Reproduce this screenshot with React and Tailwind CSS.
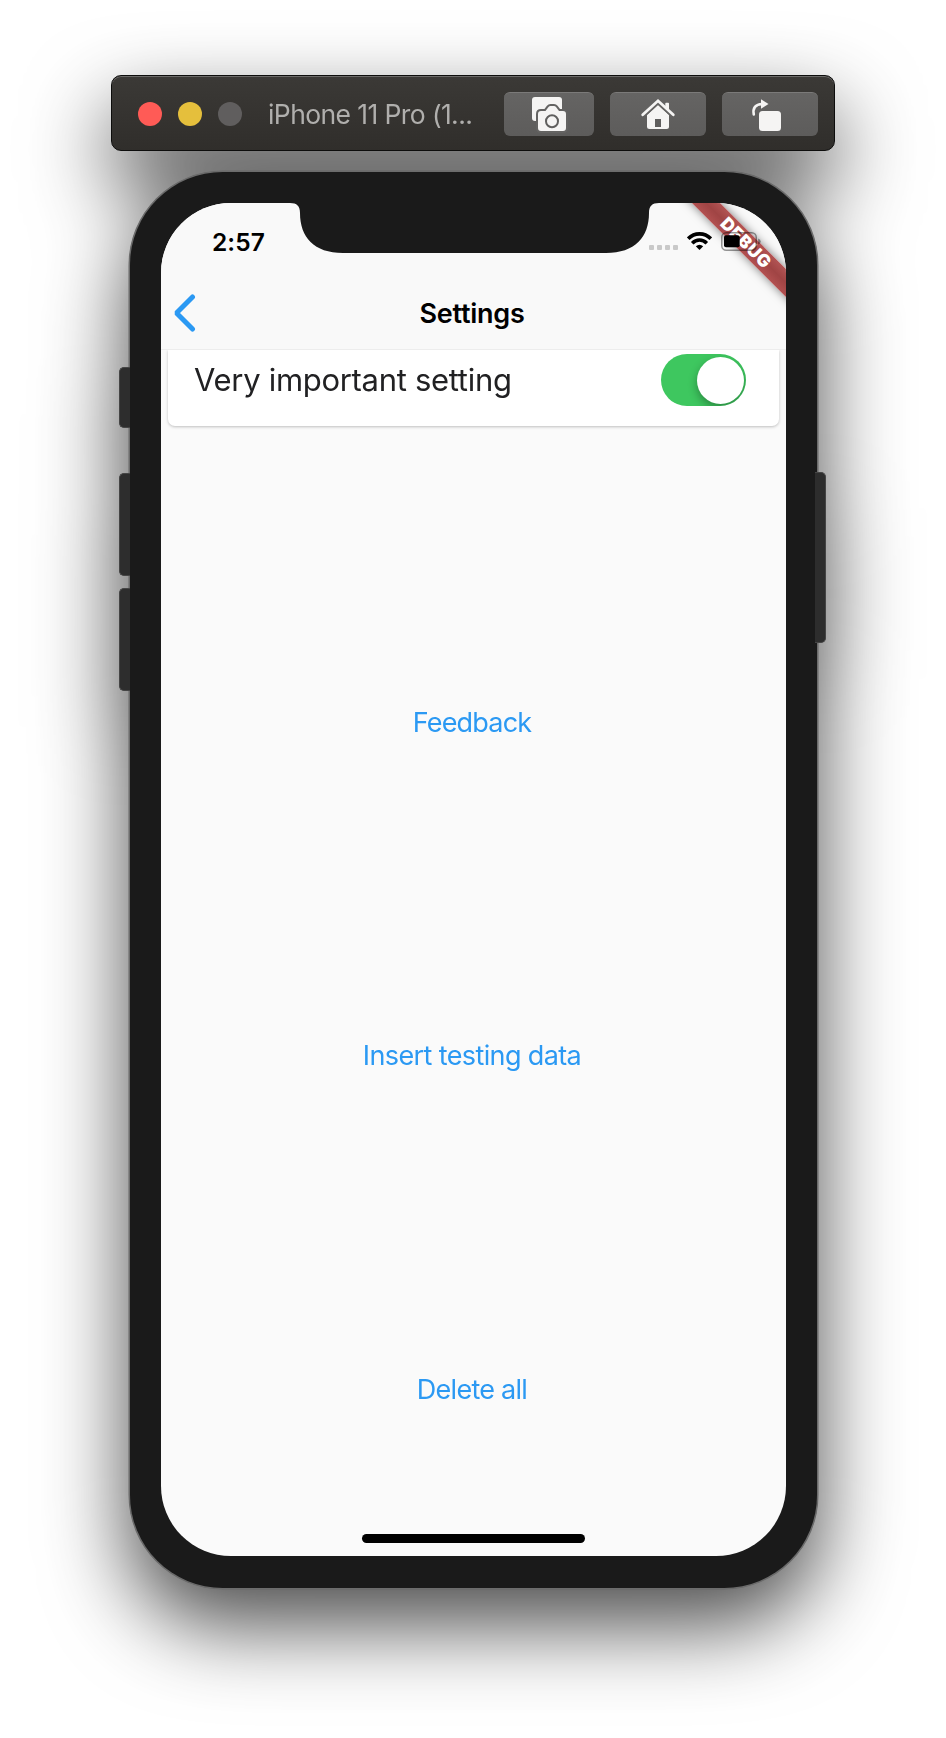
const actions = [
  { label: 'Feedback', tracking: 'tracking-[-0.8px]' },
  { label: 'Insert testing data', tracking: 'tracking-[-0.62px]' },
  { label: 'Delete all', tracking: 'tracking-[-0.74px]' },
];

function ToolButton({ width, children }) {
  return (
    <button className={`${width} h-[44px] rounded-[6px] border-t border-[#7b7a79] bg-linear-to-b from-[#656463] to-[#5d5c5b]`}>
      <svg className="-mt-px block h-[44px] w-full" fill="#f5f4f3">{children}</svg>
    </button>
  );
}

function TitleBar() {
  return (
    <header className="flex h-[76px] w-[724px] items-center rounded-[10px] border border-[#0d0d0c] bg-linear-to-b from-[#3b3936] to-[#302e2b] pl-[26px] shadow-[inset_0_1px_0_#6b6a68]">
      <div className="flex gap-4 pt-[2px]">
        <span className="size-6 rounded-full bg-[#ff5b56]" />
        <span className="size-6 rounded-full bg-[#e5bf3c]" />
        <span className="size-6 rounded-full bg-[#605e5e]" />
      </div>
      <h1 className="ml-[26px] w-[236px] whitespace-nowrap pt-[2px] text-[26.500px] leading-[34px] tracking-[-0.6px] text-[#b0afad]">iPhone 11 Pro (1...</h1>
      <div className="flex gap-4 pt-[2px]">
        <ToolButton width="w-[90px]">
          <rect x="28" y="5" width="30" height="24" rx="3" />
          <path d="M37 19h4.500l3-4q.8-1 2-1h3.500q1.200 0 2 1l3 4H59q3 0 3 3v14q0 3-3 3H37q-3 0-3-3V22q0-3 3-3Z" stroke="#646362" strokeWidth="4" />
          <path d="M37 19h4.500l3-4q.8-1 2-1h3.500q1.200 0 2 1l3 4H59q3 0 3 3v14q0 3-3 3H37q-3 0-3-3V22q0-3 3-3Z" />
          <circle cx="48" cy="29.300" r="6" stroke="#605f5e" strokeWidth="2" />
        </ToolButton>
        <ToolButton width="w-[96px]">
          <path d="M48 13 59 23v11.500q0 2.500-2.500 2.500h-17q-2.500 0-2.500-2.500V23Z" />
          <path d="M32.700 22.700 48 8.800l15.300 13.900" fill="none" stroke="#646362" strokeWidth="6" />
          <path d="M55.300 11.500q0-.8.800-.8h2.100q.8 0 .8.800V18l-3.700-3Z" />
          <path d="M32.700 22.700 48 8.800l15.300 13.900" fill="none" stroke="#f5f4f3" strokeWidth="2.800" strokeLinecap="round" />
          <rect x="45" y="27" width="6" height="8" fill="#5f5e5d" />
        </ToolButton>
        <ToolButton width="w-[96px]">
          <rect x="37" y="19" width="22" height="20" rx="3.500" />
          <path d="M31.800 22.500C30.500 16 33.500 12.200 40 12" fill="none" stroke="#f5f4f3" strokeWidth="2.600" strokeLinecap="round" />
          <path d="M39 7.300v9.400l7.500-4.700Z" />
        </ToolButton>
      </div>
    </header>
  );
}

function StatusBar() {
  return (
    <div className="flex h-[68px] shrink-0 items-center justify-between pl-[51px] pr-[25px] pt-2">
      <span className="pt-px text-[24.500px] font-semibold leading-7 tracking-[0.1px] text-black">2:57</span>
      <div className="z-20 flex h-5 items-center">
        <div className="mr-[9px] flex gap-[3px] pt-[13px]">
          <i className="size-[5px] rounded-[1px] bg-[#c9c9c9]" />
          <i className="size-[5px] rounded-[1px] bg-[#c9c9c9]" />
          <i className="size-[5px] rounded-[1px] bg-[#c9c9c9]" />
          <i className="size-[5px] rounded-[1px] bg-[#c9c9c9]" />
        </div>
        <svg width="25" height="18" viewBox="0 0 25 18" fill="none" stroke="#000" strokeWidth="3.600">
          <path d="M1.200 6.700C7.500.2 17.500.2 23.800 6.700M5.200 11.200c4.200-4.200 10.400-4.200 14.600 0" />
          <path d="M12.500 18 8.800 14.300q3.700-3 7.400 0Z" fill="#000" stroke="none" />
        </svg>
        <svg className="ml-[9px]" width="40" height="19" viewBox="0 0 40 19">
          <rect x=".75" y=".75" width="34.500" height="17.500" rx="4.500" fill="none" stroke="#000" strokeOpacity=".4" strokeWidth="1.500" />
          <rect x="3" y="3.300" width="15.700" height="12" rx="2" />
          <path d="M37.200 6.500q2.500 1 2.500 3t-2.500 3Z" fillOpacity=".4" />
        </svg>
      </div>
    </div>
  );
}

function Screen() {
  return (
    <main className="relative isolate flex h-[1353px] w-[625px] flex-col overflow-hidden rounded-[70px] bg-[#fafafa]">
      <div className="relative h-[147px] shrink-0 border-b border-[#ededed] bg-[#f9f9f9]">
        <StatusBar />
        <nav className="flex h-[84px] items-center">
          <svg className="ml-[12px]" width="24" height="38" viewBox="0 0 24 38" fill="none" stroke="#2b99f3" strokeWidth="5" strokeLinecap="round" strokeLinejoin="bevel">
            <path d="M19.500 3 3.500 19l16 16" />
          </svg>
          <h2 className="flex-1 pr-[39px] pt-[2px] text-center text-[27px] font-semibold leading-8 tracking-[-0.25px] text-black">Settings</h2>
        </nav>
      </div>
      <section className="ml-[6.500px] mr-[7px] flex h-[76px] shrink-0 items-start justify-between rounded-b-[7px] bg-white pl-[26.500px] pr-[33px] pt-[4px] shadow-[0_1px_3px_rgba(0,0,0,0.24)] [clip-path:inset(0_-5px_-5px_-5px)]">
        <span className="mt-[6px] whitespace-nowrap text-[31px] leading-10 tracking-[-0.3px] text-[#212123]">Very important setting</span>
        <button role="switch" aria-checked="true" className="flex h-[52px] w-[85px] items-center justify-end overflow-hidden rounded-full bg-[#3ec75f] pr-[2.500px]">
          <span className="size-[47px] rounded-full bg-white shadow-[0_4px_10px_rgba(0,0,0,0.32)]" />
        </button>
      </section>
      <div className="flex flex-col pr-[3px] pt-[130px]">
        {actions.map(({ label, tracking }) => (
          <button key={label} className={`h-[333.500px] shrink-0 text-center text-[27px] leading-8 text-[#2b99f3] ${tracking}`}>{label}</button>
        ))}
      </div>
      <div className="absolute left-[485px] top-[29.500px] z-10 flex h-[20px] w-[200px] rotate-45 items-center justify-center bg-linear-to-b from-[#b25454] via-[#a04444] to-[#b25050] text-[17.500px] font-black leading-5 tracking-[0.6px] text-white shadow-[0_0_10px_rgba(0,0,0,0.5)]">DEBUG</div>
      <svg className="absolute left-0 top-0 z-20" width="625" height="51" fill="#1a1a1a">
        <path d="M129 0C136 0 139 3 139 10C139 34 153 50 182 50H445C474 50 488 34 488 10C488 3 491 0 498 0Z" />
      </svg>
      <div className="absolute left-[201px] top-[1331px] h-[9px] w-[223px] rounded-full bg-black" />
    </main>
  );
}

export default function App() {
  return (
    <div className="h-[1738px] w-[946px] overflow-hidden bg-white pt-[75px] font-['Inter',sans-serif]">
      <div className="ml-[111px] w-[724px] [filter:drop-shadow(0_36px_42px_rgba(0,0,0,0.7))]">
        <TitleBar />
        <div className="ml-[8px] mt-[21px] flex">
          <div className="z-10 flex w-[11px] flex-col pt-[195px]">
            <span className="h-[61px] rounded-l-[5px] border border-r-0 border-[#454545] bg-[#2d2d2d]" />
            <span className="mt-[45px] h-[103px] rounded-l-[5px] border border-r-0 border-[#454545] bg-[#2d2d2d]" />
            <span className="mt-[12px] h-[103px] rounded-l-[5px] border border-r-0 border-[#454545] bg-[#2d2d2d]" />
          </div>
          <div className="h-[1416px] w-[686.500px] rounded-[93px] bg-[#1a1a1a] pl-[31px] pt-[31px] shadow-[0_0_0_1px_#6c6c6c,0_0_0_1.500px_#686868]">
            <Screen />
          </div>
          <div className="z-10 w-[10px] pt-[300px]">
            <span className="-ml-[2px] block h-[171px] w-[11px] rounded-r-[5px] border border-l-0 border-[#454545] bg-[#2d2d2d]" />
          </div>
        </div>
      </div>
    </div>
  );
}
